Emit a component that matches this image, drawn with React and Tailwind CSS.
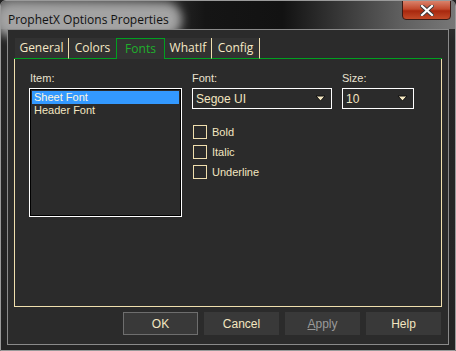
import { useState } from 'react';

const tabs = ['General', 'Colors', 'Fonts', 'WhatIf', 'Config'];

function DropArrow() {
  return (
    <svg width="11" height="7" viewBox="0 0 11 7" className="shrink-0">
      <polygon points="1,1 10,1 5.5,6" fill="#f6e9c3" stroke="#111" strokeWidth="1" />
    </svg>
  );
}

function Combo({ value, className }) {
  return (
    <div className={`h-[21px] border border-white flex items-center justify-between pl-[3px] pr-[5px] ${className}`}>
      <span className="text-[12px] text-[#f3e6c0] leading-none">{value}</span>
      <DropArrow />
    </div>
  );
}

function Check({ label }) {
  return (
    <div className="flex items-center gap-[5px] h-[14px]">
      <div className="w-[14px] h-[14px] border border-[#f0dfae]" />
      <span className="text-[11px] text-[#f3e6c0] leading-none">{label}</span>
    </div>
  );
}

function Btn({ children, isDefault, disabled }) {
  return (
    <button
      className={`w-[75px] h-[23px] bg-[#393939] text-[12px] leading-none ${
        isDefault ? 'border border-[#6e6e6e]' : ''
      } ${disabled ? 'text-[#9a9a9a]' : 'text-[#f3e6c0]'}`}
    >
      {children}
    </button>
  );
}

export default function App() {
  const [active] = useState('Fonts');

  return (
    <div className="w-[456px] h-[351px] bg-[#232323] font-['Liberation_Sans',sans-serif]">
      <div className="w-full h-full border border-[#9a9a9a] rounded-t-[6px] flex flex-col overflow-hidden bg-[linear-gradient(to_bottom,#3a3a3a,#262626_40px,#242424)]">
        {/* title bar */}
        <div className="h-[28px] shrink-0 flex justify-between bg-[linear-gradient(to_right,#5a5a5a_0%,#3a3a3a_30%,#151515_45%,#121212_62%,#5f5f5f_88%,#777_100%)]">
          <div className="pl-[4px] pt-[6px]">
            <span className="inline-block px-[3px] rounded-full bg-[#a3a3a3] shadow-[0_0_10px_10px_#a3a3a3] text-[12px] leading-[15px] text-[#111] font-['Open_Sans',sans-serif]">
              ProphetX Options Properties
            </span>
          </div>
          <div className="mr-[4px] w-[49px] h-[20px] -mt-[1px] rounded-b-[4px] border border-[#3a1a14] bg-[linear-gradient(to_bottom,#d9826a,#c2482c_45%,#a8280e_55%,#c24a28)] flex items-center justify-center">
            <svg width="14" height="11" viewBox="0 0 14 11">
              <path d="M2 1 L12 10 M12 1 L2 10" stroke="#3a3a3a" strokeWidth="4" strokeLinecap="square" />
              <path d="M2 1 L12 10 M12 1 L2 10" stroke="#fff" strokeWidth="2.2" strokeLinecap="square" />
            </svg>
          </div>
        </div>

        {/* client area */}
        <div className="mx-[6px] mb-[5px] flex-1 border border-[#8a8a8a] bg-[#2b2b2b] flex flex-col pt-[8px] px-[6px]">
          {/* tab strip */}
          <div className="flex h-[21px] shrink-0">
            <div className="w-[1px] border-b border-[#00a020]" />
            {tabs.map((t) => {
              const sel = t === active;
              return sel ? (
                <div
                  key={t}
                  className="w-[49px] h-[21px] border border-b-0 border-[#00a020] bg-[#333] flex items-center justify-center text-[12px] text-[#1fb02c] font-['Open_Sans',sans-serif]"
                >
                  {t}
                </div>
              ) : (
                <div
                  key={t}
                  className={`h-[21px] border-b border-[#00a020] bg-[#323232] flex items-center justify-center text-[12px] text-[#f6e9c6] font-['Open_Sans',sans-serif] ${
                    t === 'General' ? 'w-[54px] border-r border-r-[#f0dfae]' : ''
                  } ${t === 'Colors' ? 'w-[47px]' : ''} ${t === 'WhatIf' ? 'w-[47px] border-r border-r-[#f0dfae]' : ''} ${
                    t === 'Config' ? 'w-[48px] border-r border-r-[#f0dfae]' : ''
                  }`}
                >
                  {t}
                </div>
              );
            })}
            <div className="flex-1 border-b border-[#00a020]" />
          </div>

          {/* panel */}
          <div className="h-[248px] shrink-0 border-l border-r border-b border-[#f0dfae] flex pl-[14px] pt-[13px]">
            <div className="w-[153px] flex flex-col">
              <span className="text-[11px] text-[#e9e2d0] leading-[13px] pl-[1px]">Item:</span>
              <div className="mt-[3px] h-[129px] border border-white">
                <div className="h-full border border-black p-[1px]">
                  <div className="h-[13px] bg-[#3399ff] text-[11px] leading-[13px] text-[#fff6dc] pl-[2px]">Sheet Font</div>
                  <div className="h-[13px] text-[11px] leading-[13px] text-[#f3e6c0] pl-[2px]">Header Font</div>
                </div>
              </div>
            </div>

            <div className="ml-[10px] flex flex-col">
              <div className="flex">
                <div className="w-[140px] flex flex-col">
                  <span className="text-[11px] text-[#e9e2d0] leading-[13px]">Font:</span>
                  <Combo value="Segoe UI" className="mt-[3px] w-[140px]" />
                </div>
                <div className="ml-[10px] w-[72px] flex flex-col">
                  <span className="text-[11px] text-[#e9e2d0] leading-[13px]">Size:</span>
                  <Combo value="10" className="mt-[3px] w-[72px]" />
                </div>
              </div>
              <div className="mt-[16px] pl-[1px] flex flex-col gap-[6px]">
                <Check label="Bold" />
                <Check label="Italic" />
                <Check label="Underline" />
              </div>
            </div>
          </div>

          {/* buttons */}
          <div className="flex justify-end gap-[6px] mt-[5px] mr-[1px]">
            <Btn isDefault>OK</Btn>
            <Btn>Cancel</Btn>
            <Btn disabled>
              <span className="underline">A</span>pply
            </Btn>
            <Btn>Help</Btn>
          </div>
        </div>
      </div>
    </div>
  );
}
